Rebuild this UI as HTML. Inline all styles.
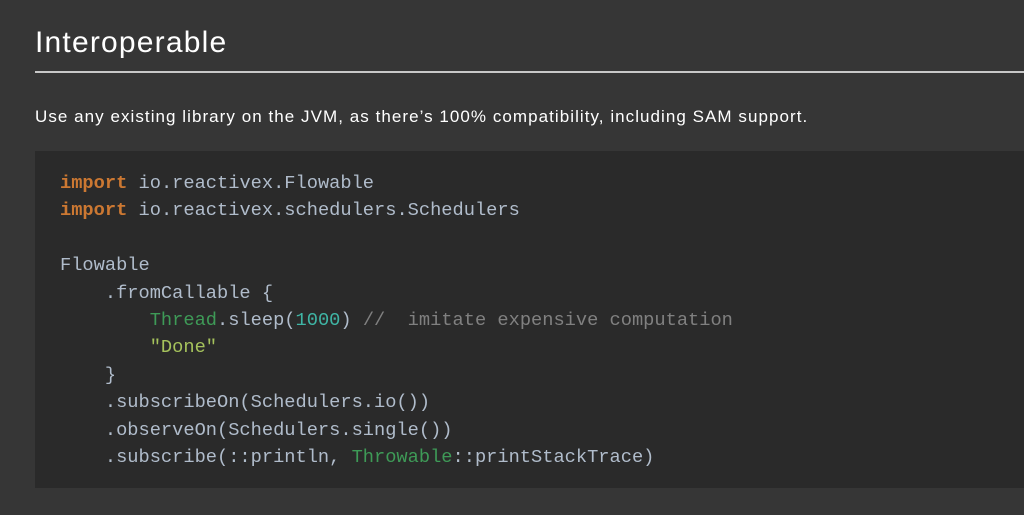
<!DOCTYPE html>
<html><head><style>
body{margin:0;width:1024px;height:515px;background:#363636;overflow:hidden;font-family:"Liberation Sans",sans-serif;position:relative}
h1{position:absolute;left:35px;top:26px;margin:0;font-weight:normal;font-size:30px;color:#fff;letter-spacing:1.2px}
.rule{position:absolute;left:35px;top:71px;width:989px;height:2px;background:#c8c8c8}
p{position:absolute;left:35px;top:107px;margin:0;font-size:17px;letter-spacing:1.05px;color:#fff;white-space:nowrap}
pre{position:absolute;left:35px;top:151px;width:989px;height:337px;margin:0;background:#2a2a2a;box-sizing:border-box;padding:19px 0 0 25px;font-family:"Liberation Mono",monospace;font-size:18.7px;line-height:27.4px;color:#b0bccb}
.k{color:#cc7832;font-weight:bold}.g{color:#3e9a57}.n{color:#3fb5a5}.c{color:#808080}.s{color:#a5c25c}
</style></head><body>
<h1>Interoperable</h1><div class="rule"></div>
<p>Use any existing library on the JVM, as there’s 100% compatibility, including SAM support.</p>
<pre><span class="k">import</span> io.reactivex.Flowable
<span class="k">import</span> io.reactivex.schedulers.Schedulers

Flowable
    .fromCallable {
        <span class="g">Thread</span>.sleep(<span class="n">1000</span>) <span class="c">//  imitate expensive computation</span>
        <span class="s">"Done"</span>
    }
    .subscribeOn(Schedulers.io())
    .observeOn(Schedulers.single())
    .subscribe(::println, <span class="g">Throwable</span>::printStackTrace)</pre>
</body></html>
